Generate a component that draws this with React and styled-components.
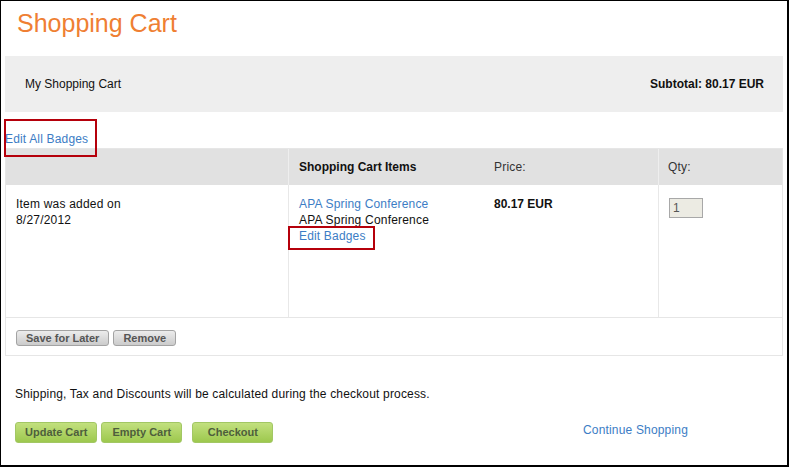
import React from "react";
import styled, { createGlobalStyle } from "styled-components";

const Global = createGlobalStyle`
  html, body { margin: 0; padding: 0; background: #fff; }
  body { font-family: "Liberation Sans", Arial, sans-serif; font-size: 12px; color: #111; }
  * { box-sizing: border-box; }
`;

const Frame = styled.div`
  width: 789px;
  height: 467px;
  border-style: solid;
  border-color: #000;
  border-width: 1px 2px 2px 1px;
  padding: 0 4px;
  background: #fff;
  overflow: hidden;
`;

const Title = styled.h1`
  margin: 8px 0 0 12px;
  font-size: 25px;
  line-height: 29px;
  font-weight: normal;
  color: #ef7f33;
`;

const SummaryBar = styled.div`
  margin-top: 18px;
  height: 56px;
  background: #eeeeee;
  display: flex;
  align-items: center;
  justify-content: space-between;
  padding: 0 19px 0 20px;
  line-height: 16px;
`;

const Subtotal = styled.span`
  font-weight: bold;
`;

const Link = styled.a`
  color: #3c7dc5;
  text-decoration: none;
  cursor: pointer;
  letter-spacing: 0.17px;
`;

const Annotated = styled.span`
  position: relative;
  display: inline-block;
`;

const RedBox = styled.span`
  position: absolute;
  left: ${(p) => p.$left}px;
  top: ${(p) => p.$top}px;
  width: ${(p) => p.$w}px;
  height: ${(p) => p.$h}px;
  border: 2px solid #b5000b;
  z-index: 2;
  pointer-events: none;
`;

const EditAllRow = styled.div`
  margin-top: 19px;
  line-height: 16px;
`;

const Table = styled.div`
  margin-top: 1px;
  border: 1px solid #e6e6e6;
`;

const Row = styled.div`
  display: grid;
  grid-template-columns: 283px 195px 175px 1fr;
  background: ${(p) => (p.$header ? "#e1e1e1" : "#fff")};
  height: ${(p) => p.$height}px;
  border-bottom: ${(p) => (p.$divider ? "1px solid #e6e6e6" : "none")};
  line-height: 16px;
`;

const Cell = styled.div`
  padding: ${(p) => (p.$header ? "10px" : "11px")} 10px 0 ${(p) => p.$pl || 10}px;
  border-right: ${(p) =>
    p.$sep ? `1px solid ${p.$header ? "#eeeeee" : "#e8e8e8"}` : "none"};
  font-weight: ${(p) => (p.$bold ? "bold" : "normal")};
  letter-spacing: ${(p) => (p.$bold ? "0" : "0.2px")};
  color: ${(p) => (p.$muted ? "#333" : "#111")};
  display: flex;
  flex-direction: column;
  align-items: flex-start;
`;

const QtyInput = styled.input`
  margin-top: 2px;
  width: 34px;
  height: 20px;
  border: 1px solid #a8a8a8;
  background: #ecebe3;
  font-family: "Liberation Sans", Arial, sans-serif;
  font-size: 12px;
  color: #555;
  padding: 0 3px;
  outline: none;
`;

const RowActions = styled.div`
  display: flex;
  gap: 4px;
  padding: 12px 10px 0 10px;
  height: 37px;
`;

const GreyButton = styled.button`
  height: 16px;
  padding: 0 9px;
  border: 1px solid #a3a3a3;
  border-radius: 3px;
  background: linear-gradient(#ececec, #cbcbcb);
  color: #555;
  font-family: "Liberation Sans", Arial, sans-serif;
  font-size: 11px;
  font-weight: bold;
  line-height: 14px;
  cursor: pointer;
`;

const Note = styled.p`
  margin: 30px 0 0 10px;
  line-height: 16px;
  letter-spacing: 0.17px;
`;

const Actions = styled.div`
  margin: 20px 0 0 10px;
  display: grid;
  grid-template-columns: 568px 1fr;
  align-items: start;
`;

const ButtonGroup = styled.div`
  display: flex;
`;

const GreenButton = styled.button`
  height: 21px;
  min-width: 81px;
  padding: 0 9px;
  margin-left: ${(p) => p.$ml || 0}px;
  border: 1px solid #a2c764;
  border-radius: 3px;
  background: linear-gradient(#c2e07e, #9dc84e);
  color: #4e5e3c;
  font-family: "Liberation Sans", Arial, sans-serif;
  font-size: 11px;
  font-weight: bold;
  line-height: 19px;
  text-align: center;
  cursor: pointer;
`;

const ContinueLink = styled(Link)`
  line-height: 16px;
  font-size: 12px;
`;

export default function App() {
  return (
    <>
      <Global />
      <Frame>
        <Title>Shopping Cart</Title>
        <SummaryBar>
          <span>My Shopping Cart</span>
          <Subtotal>Subtotal: 80.17 EUR</Subtotal>
        </SummaryBar>
        <EditAllRow>
          <Annotated>
            <Link>Edit All Badges</Link>
            <RedBox $left={-1} $top={-12} $w={93} $h={38} />
          </Annotated>
        </EditAllRow>
        <Table>
          <Row $header $height={36}>
            <Cell $header $sep />
            <Cell $header $bold>Shopping Cart Items</Cell>
            <Cell $header $sep $muted>Price:</Cell>
            <Cell $header $muted $pl={9}>Qty:</Cell>
          </Row>
          <Row $height={133} $divider>
            <Cell $sep>
              <span>Item was added on</span>
              <span>8/27/2012</span>
            </Cell>
            <Cell>
              <Link>APA Spring Conference</Link>
              <span>APA Spring Conference</span>
              <Annotated>
                <Link>Edit Badges</Link>
                <RedBox $left={-11} $top={-2} $w={87} $h={24} />
              </Annotated>
            </Cell>
            <Cell $sep $bold>80.17 EUR</Cell>
            <Cell $pl={10}>
              <QtyInput defaultValue="1" />
            </Cell>
          </Row>
          <RowActions>
            <GreyButton>Save for Later</GreyButton>
            <GreyButton>Remove</GreyButton>
          </RowActions>
        </Table>
        <Note>Shipping, Tax and Discounts will be calculated during the checkout process.</Note>
        <Actions>
          <ButtonGroup>
            <GreenButton>Update Cart</GreenButton>
            <GreenButton $ml={4}>Empty Cart</GreenButton>
            <GreenButton $ml={10}>Checkout</GreenButton>
          </ButtonGroup>
          <ContinueLink>Continue Shopping</ContinueLink>
        </Actions>
      </Frame>
    </>
  );
}
